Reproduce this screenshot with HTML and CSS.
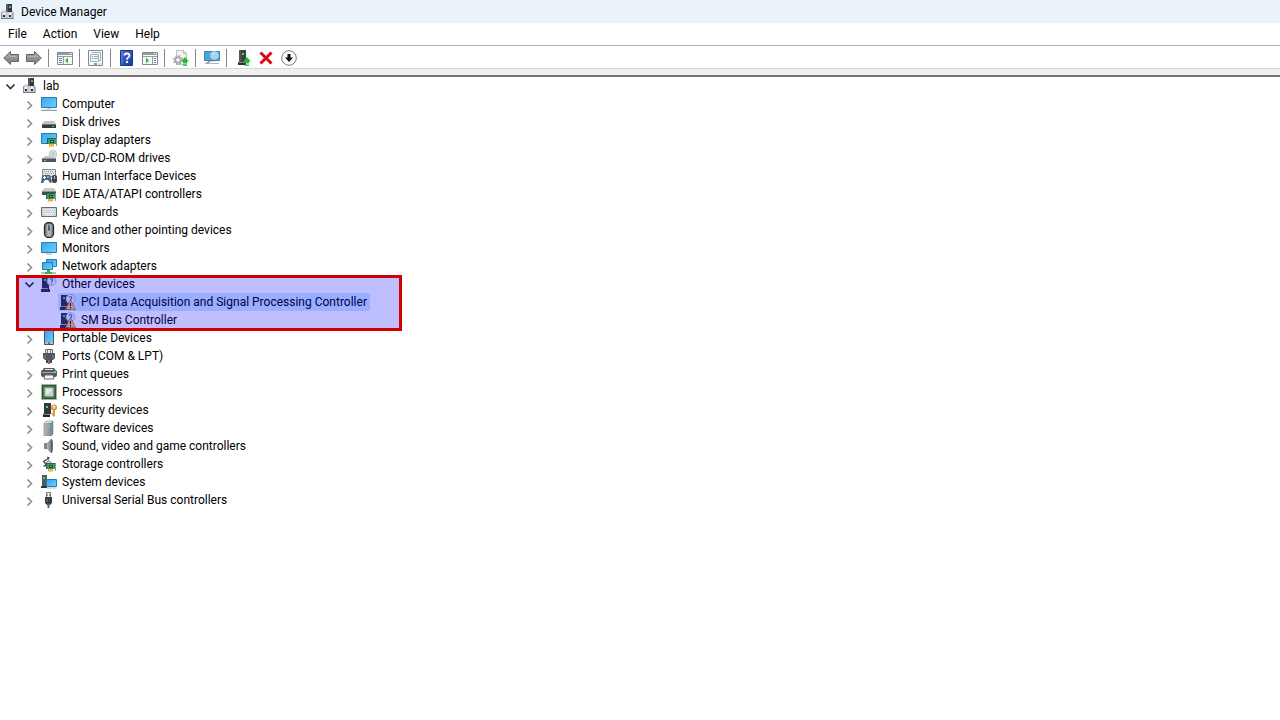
FILE: index.html
```html
<!DOCTYPE html>
<html lang="en">
<head>
<meta charset="utf-8">
<meta name="viewport" content="width=device-width, initial-scale=1">
<title>Device Manager</title>
<link rel="stylesheet" href="styles.css">
</head>
<body>
<svg class="sprite" width="0" height="0" aria-hidden="true">
  <defs>
    <linearGradient id="g-blue" x1="0" y1="0" x2="1" y2="1"><stop offset="0" stop-color="#3aa4ee"/><stop offset="1" stop-color="#6cd0ff"/></linearGradient>
    <linearGradient id="g-grey" x1="0" y1="0" x2="0" y2="1"><stop offset="0" stop-color="#a8a8a8"/><stop offset="1" stop-color="#7c7c7c"/></linearGradient>
    <linearGradient id="g-metal" x1="0" y1="0" x2="1" y2="0"><stop offset="0" stop-color="#b6bcc2"/><stop offset="1" stop-color="#737b84"/></linearGradient>
    <linearGradient id="g-mouse" x1="0" y1="0" x2="1" y2="0"><stop offset="0" stop-color="#6b7076"/><stop offset=".5" stop-color="#b8c0c8"/><stop offset="1" stop-color="#6b7076"/></linearGradient>
    <linearGradient id="g-help" x1="0" y1="0" x2="1" y2="1"><stop offset="0" stop-color="#4568d6"/><stop offset="1" stop-color="#1c3a9c"/></linearGradient>
  </defs>
  <symbol id="open" viewBox="0 0 16 16"><path d="M4.500 6.500 8.500 10.500 12.500 6.500" fill="none" stroke="#333" stroke-width="1.700"/></symbol>
  <symbol id="closed" viewBox="0 0 16 16"><path d="M6.500 5.500 10.500 9.500 6.500 13.500" fill="none" stroke="#8f8f8f" stroke-width="1.600"/></symbol>
  <symbol id="card" viewBox="0 0 10 9"><path d="M0 0h9v6H0z" fill="#1d6b45"/><path d="M1 1h8v5H1z" fill="#3d9a6c"/><path d="M3 2h4v3H3z" fill="#125235"/><path d="M4 3h2v1H4z" fill="#63c38e"/><path d="M9 0h1v8H9z" fill="#8d969c"/><path d="M2 6h5v2.500H2z" fill="#f2a11e"/><path d="M3.500 6v2.500M5.500 6v2.500" stroke="#ffe06a" stroke-width=".6"/></symbol>
  <symbol id="lab" viewBox="0 0 16 16"><path d="M1 8.500 2 6.500h10.500l1 2v6.500H1z" fill="#cfccd8"/><path d="M1.500 8.500v6M13 8.500v6" stroke="#908d9e"/><path d="M1 14.500h12.500" stroke="#77758a"/><path d="M6 0h6v8H6z" fill="#35383b"/><path d="M6 0h2v8H6z" fill="#585b5f"/><path d="M9 2h2v2H9z" fill="#42c945"/><path d="M3 11h2v2H3zM9 11h2v2H9z" fill="#2c2d32"/><path d="M3 9h2v2H3zM9 9h2v2H9z" fill="#f8f8fa"/></symbol>
  <symbol id="computer" viewBox="0 0 16 16"><path d="M.5 1.500h15v10H.5z" fill="url(#g-blue)" stroke="#287fae"/><path d="M6 12.500h4" stroke="#b9d4e4"/><path d="M0 14.500h16" stroke="#8ea4b4"/><path d="M1 13.500h14" stroke="#dce8f0"/></symbol>
  <symbol id="monitor" viewBox="0 0 16 16"><path d="M.5 2.500h15v10H.5z" fill="url(#g-blue)" stroke="#287fae"/><path d="M5 14h6" stroke="#9ab0be"/></symbol>
  <symbol id="disk" viewBox="0 0 16 16"><path d="M3 7h10l2 3H1z" fill="#c5c5c5"/><path d="M1 10h14v4H1z" fill="#37393b"/><path d="M1 10h14v1H1z" fill="#77797b"/><path d="M11 12h2v1h-2z" fill="#39e34c"/></symbol>
  <symbol id="display" viewBox="0 0 16 16"><path d="M.5 1.500h15v10H.5z" fill="url(#g-blue)" stroke="#287fae"/><use href="#card" x="6" y="6" width="10" height="9"/></symbol>
  <symbol id="dvd" viewBox="0 0 16 16"><path d="M4 6h8l3 3H1z" fill="#c4c8ca"/><path d="M1 8h14v4H1z" fill="#505457"/><path d="M1 8h14v1H1z" fill="#92979a"/><path d="M3 10h2v1H3z" fill="#41df51"/><circle cx="12" cy="4" r="3.800" fill="#dde1e4" stroke="#b3b8bc" stroke-width=".7"/><circle cx="12" cy="4" r="1.200" fill="#fff" stroke="#9ba1a6" stroke-width=".8"/></symbol>
  <symbol id="keyboard" viewBox="0 0 16 16"><path d="M.5 3.500h15v9H.5z" fill="#cfd3d6" stroke="#686d71"/><path d="M2 5.500h12M2 9.500h12" stroke="#f8f8f8" stroke-dasharray="1 1"/><path d="M3 7.500h11" stroke="#f8f8f8" stroke-dasharray="1 1"/><path d="M4 11h8" stroke="#f0f0f0"/></symbol>
  <symbol id="hid" viewBox="0 0 16 16"><path d="M1.500 1.500h13v7h-13z" fill="#e2e5e7" stroke="#858b90"/><path d="M3 3.500h10M4 5.500h10" stroke="#9298a0" stroke-dasharray="1 1"/><path d="M3 7h6l2 6-1 2H9l-2-3H4l-2 3H0l1-7z" fill="#596576"/><path d="M3 8h1v1h1v1H4v1H3v-1H2V9h1z" fill="#fff"/><path d="M6 8h2v2H6z" fill="#56b9f1"/><rect x="11" y="7" width="5" height="8" rx="2" fill="#3c4145"/><path d="M13.500 8v3" stroke="#c8c8c8"/></symbol>
  <symbol id="ide" viewBox="0 0 16 16"><path d="M3 2h10l2 3H1z" fill="#c8cacc"/><path d="M1 5h14v4H1z" fill="#484b4d"/><path d="M1 5h14v1H1z" fill="#929698"/><use href="#card" x="5" y="7" width="10" height="9"/></symbol>
  <symbol id="mouse" viewBox="0 0 16 16"><rect x="3.500" y=".5" width="9" height="15" rx="4" fill="url(#g-mouse)" stroke="#26292b" stroke-width="1.300"/><path d="M8 1v2" stroke="#333"/><path d="M7 3h2v6H7z" fill="#2c2f33" stroke="#e1e4e7" stroke-width=".5"/></symbol>
  <symbol id="network" viewBox="0 0 16 16"><path d="M5.500 1.500h10v7h-10z" fill="url(#g-blue)" stroke="#287fae"/><path d="M1.500 4.500h10v7h-10z" fill="url(#g-blue)" stroke="#287fae"/><path d="M6 12h3v2h2v2H4v-2h2z" fill="#36b44a"/><path d="M0 15h4M11 15h4" stroke="#b5bfc4" stroke-width="2"/></symbol>
  <symbol id="other" viewBox="0 0 16 16"><path d="M1 1h7v12h1v3H0v-3h1z" fill="#303437"/><path d="M1 12.500h6" stroke="#9da2a7"/><path d="M3 3h2v2H3z" fill="#50df5a"/><circle cx="10.500" cy="5" r="4.500" fill="#e9f2f8" stroke="#93afc2" stroke-width=".8"/><path d="M9.200 3.800Q9.200 2.500 10.500 2.500t1.400 1.200Q11.900 4.600 10.500 5.400v.8M10.500 7.200v1" fill="none" stroke="#346eb9" stroke-width="1.100"/></symbol>
  <symbol id="warn" viewBox="0 0 16 16"><use href="#other"/><path d="M10.500 5.500 15.500 15.500H5.500z" fill="#ffc46a" stroke="#8f6a2c" stroke-width=".7"/><path d="M10.500 9v3M10.500 13v1.500" stroke="#1c1714" stroke-width="1.100"/></symbol>
  <symbol id="portable" viewBox="0 0 16 16"><path d="M3.500.5h9v14h-9z" fill="url(#g-blue)" stroke="#4c565d"/><path d="M4 12h8v2H4z" fill="#b7bdc1"/><path d="M7 13h2" stroke="#3e464b"/></symbol>
  <symbol id="port" viewBox="0 0 16 16"><path d="M4.500 1.500h7v4h-7z" fill="#eee" stroke="#6c6c6c"/><path d="M6.500 2v3M9.500 2v3" stroke="#777"/><path d="M2 5h12v5l-2 2H4l-2-2z" fill="#555759"/><path d="M4 7v3M12 7v3" stroke="#8e9092"/><path d="M5 12h2v3H5zM9 12h2v3H9z" fill="#444"/><path d="M7 12h2v4H7z" fill="#777"/></symbol>
  <symbol id="print" viewBox="0 0 16 16"><path d="M3 2h10l2 3H1z" fill="#555a5e"/><path d="M4 3h8v1H4z" fill="#dfe2e4"/><rect x="0" y="4" width="16" height="7" rx="2" fill="#53585b"/><path d="M1 6h14v1H1z" fill="#a5aaad"/><path d="M13 5h2v1h-2z" fill="#3cdb58"/><path d="M4 9h8l1 4H3z" fill="#f2f4f5" stroke="#6a7074"/></symbol>
  <symbol id="cpu" viewBox="0 0 16 16"><path d="M.5.5h15v15H.5z" fill="#367357" stroke="#c8ad62" stroke-dasharray="1 1"/><path d="M1.500 1.500h13v13h-13z" fill="#407b60" stroke="#205b40"/><path d="M4 4h8v8H4z" fill="#e5e7e4" stroke="#aab7ae"/><path d="M12 5v7H5z" fill="#c8ceca"/></symbol>
  <symbol id="security" viewBox="0 0 16 16"><path d="M3 1h7v11H3z" fill="#35383b"/><path d="M2 12h7v3H2z" fill="#25282a"/><path d="M3 12.500h6" stroke="#888"/><path d="M5 4h2v2H5z" fill="#4be053"/><circle cx="13" cy="5.500" r="2.600" fill="#efbd45" stroke="#b98532"/><circle cx="13" cy="4.500" r="1" fill="#fff"/><path d="M12 8h2v6l-1 1-1-1z" fill="#d5a043"/><path d="M12 11h-1v2h1" fill="none" stroke="#d5a043"/></symbol>
  <symbol id="software" viewBox="0 0 16 16"><path d="m3 3 2-2h7v13l-2 2H3z" fill="url(#g-metal)" stroke="#848b92" stroke-width=".7"/><path d="m3 3 2-2h7l-2 2z" fill="#ced3d7"/><path d="M10 3v13l2-2V1z" fill="#808993"/><path d="M7 5h2v2H7z" fill="#34d5ef"/></symbol>
  <symbol id="sound" viewBox="0 0 16 16"><path d="M3 5h3v6H3z" fill="#7f858a"/><path d="m6 5 4-4v14l-4-4z" fill="url(#g-metal)"/><path d="M10 1q2-1 2 7t-2 7z" fill="#5d6368"/></symbol>
  <symbol id="storage" viewBox="0 0 16 16"><path d="M8 2 2.500 5.500 6 9.500" fill="none" stroke="#44484b" stroke-width="1.200"/><path d="M6 .5l3 1L7 4z" fill="#44484b"/><path d="M5 10.500H1.500L5 8z" fill="#44484b"/><path d="m5 6.500 3-2 2 2-3 2z" fill="#ddd" stroke="#555" stroke-width=".8"/><use href="#card" x="5" y="7" width="10" height="9"/></symbol>
  <symbol id="system" viewBox="0 0 16 16"><path d="M1 1h5v12H1z" fill="#505961"/><path d="M0 12h6v2H0z" fill="#303438"/><path d="M2 3h2v2H2z" fill="#47dc50"/><path d="M5.500 5.500h10v7h-10z" fill="url(#g-blue)" stroke="#287fae"/><path d="M6 14h9" stroke="#aab9c2"/></symbol>
  <symbol id="usb" viewBox="0 0 16 16"><path d="M5.500.5h4v5h-4z" fill="#f3f3f3" stroke="#737779"/><path d="M6.500 2v2M8.500 2v2" stroke="#777" stroke-width=".8"/><path d="M4 5h7v6l-2 2H6l-2-2z" fill="#3b3e40"/><path d="M6.500 12h2v4h-2z" fill="#626568"/><path d="M6 7v3" stroke="#777"/></symbol>

  <symbol id="back" viewBox="0 0 16 16"><path d="M.7 8 7.500 1.500v3h8v7h-8v3z" fill="url(#g-grey)" stroke="#666"/><path d="M3 8 6.500 5v1.500h7" fill="none" stroke="#b4b4b4"/></symbol>
  <symbol id="forward" viewBox="0 0 16 16"><path d="M15.300 8 8.500 1.500v3h-8v7h8v3z" fill="url(#g-grey)" stroke="#666"/><path d="M2 6.500h7.500V5l3 3" fill="none" stroke="#b4b4b4"/></symbol>
  <symbol id="tree-pane" viewBox="0 0 16 16"><path d="M.5 2.500h15v12H.5z" fill="#f5f7f8" stroke="#838b91"/><path d="M1 3h14v2H1z" fill="#929da6"/><path d="M1 6.500h14M6.500 7v7" stroke="#929da6"/><path d="M2 8.500h3M2 10.500h3M2 12.500h3" stroke="#59849c"/><path d="m8 10.500 3-3v6z" fill="#34b92f"/><path d="M12 3.500h1M14 3.500h1" stroke="#fff"/></symbol>
  <symbol id="action-pane" viewBox="0 0 16 16"><path d="M.5 2.500h15v12H.5z" fill="#f5f7f8" stroke="#838b91"/><path d="M1 3h14v2H1z" fill="#929da6"/><path d="M1 6.500h14M10.500 7v7" stroke="#929da6"/><path d="M12 8.500h2M12 10.500h2M12 12.500h2" stroke="#59849c"/><path d="m7 10.500-3-3v6z" fill="#34b92f"/><path d="M12 3.500h1M14 3.500h1" stroke="#fff"/></symbol>
  <symbol id="properties" viewBox="0 0 16 16"><path d="M.5.5h14v15H.5z" fill="#fafafa" stroke="#838b91"/><path d="M2.500 4.500h8v7h-8z" fill="#f5f7f8" stroke="#a9b4bb"/><path d="M3.500 2.500h9v8h-2" fill="none" stroke="#a1adb5"/><path d="M4 6.500h1M4 8.500h1" stroke="#4b9ac2"/><path d="M6 6.500h4M6 8.500h4" stroke="#a2a8ac"/><path d="M6 13h3v2H6z" fill="#26bdec"/><path d="M10 14h3" stroke="#b4bcc2"/></symbol>
  <symbol id="help" viewBox="0 0 16 16"><path d="M1.500.5h12v15h-12z" fill="url(#g-help)" stroke="#16368e"/><path d="M3 1v14" stroke="#6b88e6"/><path d="M5.500 5.500q0-2 2.400-2 2.600 0 2.600 2 0 1.200-1.300 2-1.200.7-1.200 2.200M8 11v2" fill="none" stroke="#fff" stroke-width="1.800"/></symbol>
  <symbol id="arrow-up" viewBox="0 0 8 9"><path d="M4 0 8 4.500H6V6H2V4.500H0z" fill="#25bd33"/><path d="M2 7h4M2 8.500h4" stroke="#25bd33" stroke-width=".9"/></symbol>
  <symbol id="update" viewBox="0 0 16 16"><path d="M3.500.5h7l3 3v11h-10z" fill="#f4f4f4" stroke="#c2c2c2"/><path d="M10.500.5v3h3" fill="none" stroke="#b7b7b7"/><circle cx="5" cy="10" r="4" fill="none" stroke="#a4a9ac" stroke-width="2" stroke-dasharray="1.800 1.340"/><circle cx="5" cy="10" r="2.800" fill="#d8dbdd" stroke="#a4a9ac" stroke-width="1.400"/><circle cx="5" cy="10" r="1.200" fill="#fff"/><use href="#arrow-up" x="8" y="7" width="8" height="9"/></symbol>
  <symbol id="scan" viewBox="0 0 16 16"><path d="M.5 1.500h15v9H.5z" fill="#46a8dc" stroke="#3987b3"/><path d="M1 13.500h14" stroke="#a9b8c1"/><path d="M5 11.500h6" stroke="#cfdbe2"/><path d="m8 8.500-5 5" stroke="#7b8b96" stroke-width="1.500"/><circle cx="10.500" cy="5.500" r="4" fill="#9bd6f5" stroke="#b9ccd6"/><path d="M8.500 5q.8-1.700 2.500-1.700" fill="none" stroke="#dff5ff"/></symbol>
  <symbol id="driver" viewBox="0 0 16 16"><path d="M4 0h7v12H4z" fill="#3d4043"/><path d="M4 0h2v12H4z" fill="#575a5d"/><path d="M3 12h8v3H3z" fill="#2c2f31"/><path d="M4 12.500h6" stroke="#85898c"/><path d="M7 3h2v2H7z" fill="#47e44b"/><use href="#arrow-up" x="8" y="7" width="8" height="9"/></symbol>
  <symbol id="remove" viewBox="0 0 16 16"><path d="m2.500 2.500 11 11M13.500 2.500l-11 11" stroke="#dc0712" stroke-width="3"/></symbol>
  <symbol id="disable" viewBox="0 0 16 16"><circle cx="8" cy="8" r="7.300" fill="#fff" stroke="#777"/><path d="M6.500 4h3v3.500H12l-4 4.500-4-4.500h2.500z" fill="#111"/></symbol>
</svg>

<header class="titlebar">
  <svg class="icon"><use href="#lab"/></svg>
  <h1 class="title">Device Manager</h1>
</header>
<nav class="menubar" aria-label="Menu">
  <button class="menu">File</button>
  <button class="menu">Action</button>
  <button class="menu">View</button>
  <button class="menu">Help</button>
</nav>
<div class="toolbar" role="toolbar" aria-label="Tools">
  <button class="tool" aria-label="Back"><svg class="icon"><use href="#back"/></svg></button>
  <button class="tool" aria-label="Forward"><svg class="icon"><use href="#forward"/></svg></button>
  <span class="separator"></span>
  <button class="tool" aria-label="Show or hide console tree"><svg class="icon"><use href="#tree-pane"/></svg></button>
  <span class="separator"></span>
  <button class="tool" aria-label="Properties"><svg class="icon"><use href="#properties"/></svg></button>
  <span class="separator"></span>
  <button class="tool" aria-label="Help"><svg class="icon"><use href="#help"/></svg></button>
  <button class="tool" aria-label="Show or hide action pane"><svg class="icon"><use href="#action-pane"/></svg></button>
  <span class="separator"></span>
  <button class="tool" aria-label="Update driver"><svg class="icon"><use href="#update"/></svg></button>
  <span class="separator"></span>
  <button class="tool" aria-label="Scan for hardware changes"><svg class="icon"><use href="#scan"/></svg></button>
  <span class="separator"></span>
  <button class="tool" aria-label="Add drivers"><svg class="icon"><use href="#driver"/></svg></button>
  <button class="tool" aria-label="Uninstall device"><svg class="icon"><use href="#remove"/></svg></button>
  <button class="tool" aria-label="Disable device"><svg class="icon"><use href="#disable"/></svg></button>
</div>
<div class="strip"></div>

<main class="content">
  <ul class="tree">
    <li>
      <div class="row"><button class="toggle" aria-label="Collapse lab"><svg class="icon"><use href="#open"/></svg></button><span class="item"><svg class="icon"><use href="#lab"/></svg>lab</span></div>
      <ul class="branch">
        <li class="row"><button class="toggle" aria-label="Expand Computer"><svg class="icon"><use href="#closed"/></svg></button><span class="item"><svg class="icon"><use href="#computer"/></svg>Computer</span></li>
        <li class="row"><button class="toggle" aria-label="Expand Disk drives"><svg class="icon"><use href="#closed"/></svg></button><span class="item"><svg class="icon"><use href="#disk"/></svg>Disk drives</span></li>
        <li class="row"><button class="toggle" aria-label="Expand Display adapters"><svg class="icon"><use href="#closed"/></svg></button><span class="item"><svg class="icon"><use href="#display"/></svg>Display adapters</span></li>
        <li class="row"><button class="toggle" aria-label="Expand DVD/CD-ROM drives"><svg class="icon"><use href="#closed"/></svg></button><span class="item"><svg class="icon"><use href="#dvd"/></svg>DVD/CD-ROM drives</span></li>
        <li class="row"><button class="toggle" aria-label="Expand Human Interface Devices"><svg class="icon"><use href="#closed"/></svg></button><span class="item"><svg class="icon"><use href="#hid"/></svg>Human Interface Devices</span></li>
        <li class="row"><button class="toggle" aria-label="Expand IDE ATA/ATAPI controllers"><svg class="icon"><use href="#closed"/></svg></button><span class="item"><svg class="icon"><use href="#ide"/></svg>IDE ATA/ATAPI controllers</span></li>
        <li class="row"><button class="toggle" aria-label="Expand Keyboards"><svg class="icon"><use href="#closed"/></svg></button><span class="item"><svg class="icon"><use href="#keyboard"/></svg>Keyboards</span></li>
        <li class="row"><button class="toggle" aria-label="Expand Mice and other pointing devices"><svg class="icon"><use href="#closed"/></svg></button><span class="item"><svg class="icon"><use href="#mouse"/></svg>Mice and other pointing devices</span></li>
        <li class="row"><button class="toggle" aria-label="Expand Monitors"><svg class="icon"><use href="#closed"/></svg></button><span class="item"><svg class="icon"><use href="#monitor"/></svg>Monitors</span></li>
        <li class="row"><button class="toggle" aria-label="Expand Network adapters"><svg class="icon"><use href="#closed"/></svg></button><span class="item"><svg class="icon"><use href="#network"/></svg>Network adapters</span></li>
        <li class="marked">
          <div class="row"><button class="toggle" aria-label="Collapse Other devices"><svg class="icon"><use href="#open"/></svg></button><span class="item"><svg class="icon"><use href="#other"/></svg>Other devices</span></div>
          <ul class="branch leaves">
            <li class="row"><span class="item selected"><svg class="icon"><use href="#warn"/></svg>PCI Data Acquisition and Signal Processing Controller</span></li>
            <li class="row"><span class="item"><svg class="icon"><use href="#warn"/></svg>SM Bus Controller</span></li>
          </ul>
        </li>
        <li class="row"><button class="toggle" aria-label="Expand Portable Devices"><svg class="icon"><use href="#closed"/></svg></button><span class="item"><svg class="icon"><use href="#portable"/></svg>Portable Devices</span></li>
        <li class="row"><button class="toggle" aria-label="Expand Ports"><svg class="icon"><use href="#closed"/></svg></button><span class="item"><svg class="icon"><use href="#port"/></svg>Ports (COM &amp; LPT)</span></li>
        <li class="row"><button class="toggle" aria-label="Expand Print queues"><svg class="icon"><use href="#closed"/></svg></button><span class="item"><svg class="icon"><use href="#print"/></svg>Print queues</span></li>
        <li class="row"><button class="toggle" aria-label="Expand Processors"><svg class="icon"><use href="#closed"/></svg></button><span class="item"><svg class="icon"><use href="#cpu"/></svg>Processors</span></li>
        <li class="row"><button class="toggle" aria-label="Expand Security devices"><svg class="icon"><use href="#closed"/></svg></button><span class="item"><svg class="icon"><use href="#security"/></svg>Security devices</span></li>
        <li class="row"><button class="toggle" aria-label="Expand Software devices"><svg class="icon"><use href="#closed"/></svg></button><span class="item"><svg class="icon"><use href="#software"/></svg>Software devices</span></li>
        <li class="row"><button class="toggle" aria-label="Expand Sound, video and game controllers"><svg class="icon"><use href="#closed"/></svg></button><span class="item"><svg class="icon"><use href="#sound"/></svg>Sound, video and game controllers</span></li>
        <li class="row"><button class="toggle" aria-label="Expand Storage controllers"><svg class="icon"><use href="#closed"/></svg></button><span class="item"><svg class="icon"><use href="#storage"/></svg>Storage controllers</span></li>
        <li class="row"><button class="toggle" aria-label="Expand System devices"><svg class="icon"><use href="#closed"/></svg></button><span class="item"><svg class="icon"><use href="#system"/></svg>System devices</span></li>
        <li class="row"><button class="toggle" aria-label="Expand Universal Serial Bus controllers"><svg class="icon"><use href="#closed"/></svg></button><span class="item"><svg class="icon"><use href="#usb"/></svg>Universal Serial Bus controllers</span></li>
      </ul>
    </li>
  </ul>
</main>
</body>
</html>
```
FILE: styles.css
```css
*,
*::after { box-sizing: border-box; }

body {
  margin: 0;
  min-height: 100vh;
  background: #fff;
  color: #000;
  font: 12px/18px "Segoe UI", Roboto, "Noto Sans", sans-serif;
}

button {
  padding: 0;
  border: 0;
  background: none;
  color: inherit;
  font: inherit;
}

.sprite { position: absolute; }

.icon {
  display: block;
  flex: none;
  width: 16px;
  height: 16px;
}

.titlebar {
  display: flex;
  align-items: center;
  gap: 5px;
  height: 23px;
  background: #ebf3fa;
}

.title {
  margin: 0;
  font-size: 12px;
  font-weight: 400;
}

.menubar {
  display: flex;
  height: 23px;
  border-bottom: 1px solid #b2b2bc;
}

.menu { padding: 0 8px; }

.toolbar {
  display: flex;
  align-items: center;
  height: 23px;
  padding-top: 2px;
  border-bottom: 1px solid #d8d8d8;
}

.tool {
  padding: 0 4px 0 3px;
}

.separator {
  width: 8px;
  height: 18px;
  border-left: 2px solid transparent;
  background: linear-gradient(#858585, #858585) left / 1px 100% no-repeat padding-box;
}

.strip {
  height: 8px;
  border-bottom: 2px solid #747474;
  background: #f0f0f0;
}

.tree,
.branch {
  margin: 0;
  padding: 0;
  list-style: none;
}

.tree { padding-left: 2px; }

.branch { padding-left: 19px; }

.leaves { padding-left: 37px; }

.row {
  display: flex;
  align-items: center;
  height: 18px;
}

.toggle { width: 18px; }

.item {
  display: flex;
  align-items: center;
  gap: 5px;
  padding: 0 3px 0 2px;
  white-space: nowrap;
}

.selected {
  border-radius: 2px;
  background: #cce8ff;
}

.marked { position: relative; }

/* Highlight frame laid over the whole group */
.marked::after {
  content: "";
  position: absolute;
  top: 0;
  bottom: -2px;
  left: -5px;
  width: 386px;
  border: 3px solid #d00000;
  background: rgba(0, 0, 255, 0.25);
  background-clip: padding-box;
  pointer-events: none;
}
```
